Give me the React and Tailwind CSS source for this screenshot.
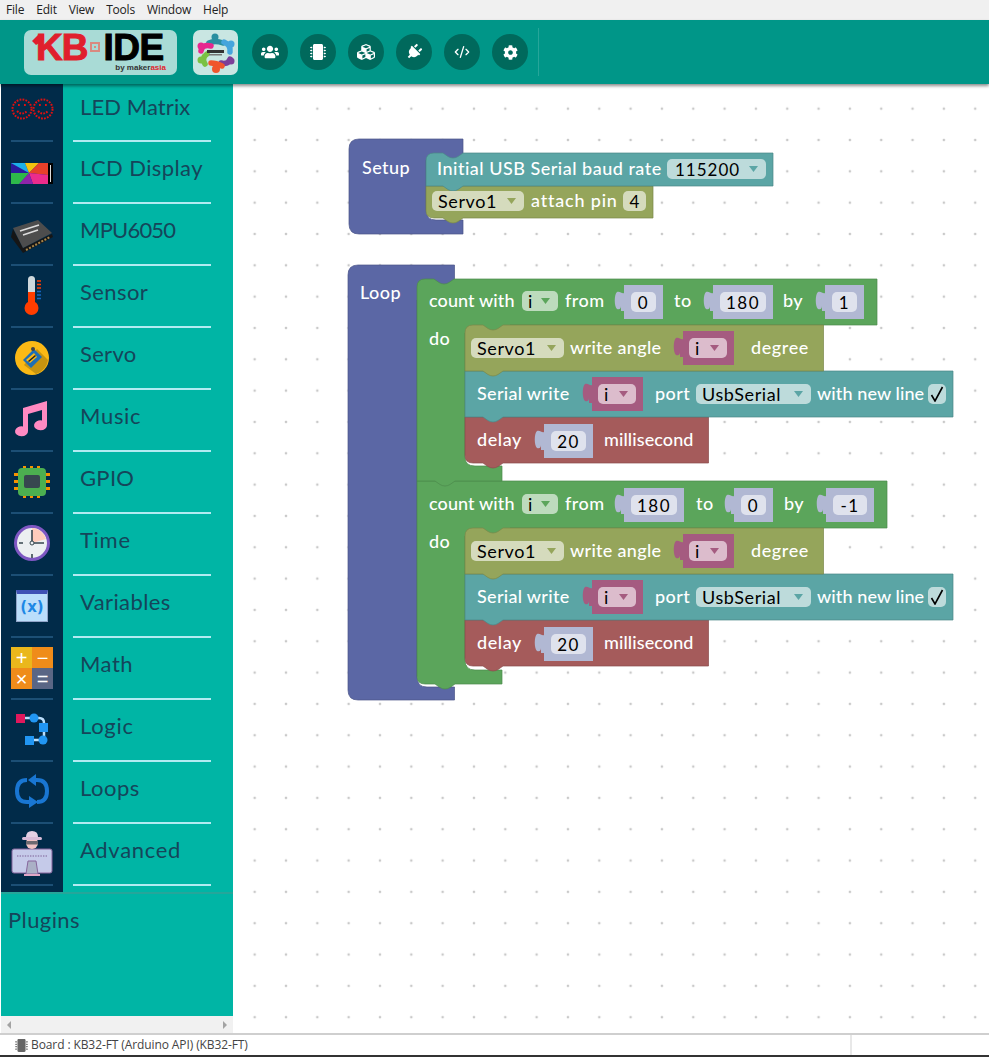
import React from 'react';
import { CodeXml } from 'lucide-react';
import { FaUsers, FaMicrochip, FaCubes, FaPlug, FaCog } from 'react-icons/fa';

// notch pieces for block outlines
const NOTCH = 'l5 3.5q2.5 1.5 5 1.5t5 -1.5l5 -3.5';
const TAB = 'l-5 3.5q-2.5 1.5 -5 1.5t-5 -1.5l-5 -3.5';

const PURPLE = ['#5b67a5', '#4a5488'];
const GREEN = ['#5ba55b', '#4c8a4c'];
const OLIVE = ['#95a55b', '#7a8849'];
const TEAL = ['#5ba5a5', '#4a8888'];
const RED = ['#a55b5b', '#8a4c4c'];

const Shape = ({ d, color }) => (
  <path d={d} fill={color[0]} stroke={color[1]} strokeWidth="0.7" />
);

const Label = ({ className = '', t = 'tracking-[0.45px]', children }) => (
  <span className={`mb-[3px] text-white text-[18px] font-medium leading-none whitespace-nowrap ${t} ${className}`}>{children}</span>
);

const Dropdown = ({ className, bg, arrow, children }) => (
  <div className={`h-5 rounded-[5px] flex items-center justify-between pl-[6px] pr-[8px] text-[18px] text-black tracking-[0.6px] leading-none ${bg} ${className}`}>
    <span>{children}</span>
    <svg width="9" height="6" viewBox="0 0 9 6"><polygon points="0,0 9,0 4.5,6" fill={arrow} /></svg>
  </div>
);

const PuzzleTab = ({ fill }) => (
  <svg className="absolute -left-[10px] top-0" width="10" height="34" viewBox="0 0 10 34">
    <path d="M10 8C8 9 6 6 3 7C0 9 0 22 3 24C6 25 7 23 7 21L7 26L10 26Z" fill={fill} />
  </svg>
);

const Value = ({ className, children }) => (
  <div className={`relative mt-[2px] h-[34px] bg-[#b1b8d3] p-[7px] flex ${className}`}>
    <PuzzleTab fill="#b1b8d3" />
    <div className="flex-1 rounded-[5px] bg-[#dfe2ed] flex items-center justify-center text-[17px] text-black tracking-[1.5px] leading-none">
      {children}
    </div>
  </div>
);

const VarBlock = ({ className }) => (
  <div className={`relative h-[34px] w-[51px] bg-[#a55b80] py-[7px] pl-[6px] pr-[7px] flex ${className}`}>
    <PuzzleTab fill="#a55b80" />
    <Dropdown className="flex-1" bg="bg-[#dcbccc]" arrow="#a55b80">i</Dropdown>
  </div>
);

const CheckBox = () => (
  <div className="ml-[7px] w-[18px] h-5 rounded-[5px] bg-[#bddbdb] flex items-center justify-center">
    <svg width="14" height="16" viewBox="0 0 14 16"><path d="M1.5 9L5 15L12.5 1" fill="none" stroke="#000" strokeWidth="1.6" /></svg>
  </div>
);

const Row = ({ className, children }) => (
  <div className={`absolute h-[34px] flex items-center ${className}`}>{children}</div>
);

const Blocks = () => (
  <>
    <svg className="absolute inset-0" width="756" height="949" viewBox="233 84 756 949">
      {/* setup */}
      <Shape color={PURPLE} d="M359 139H463V160H426V210Q426 220 436 220H463V234H359Q349 234 349 224V149Q349 139 359 139Z" />
      <Shape color={OLIVE} d={`M426 186H653V218H463${TAB}H434Q426 218 426 210Z`} />
      <Shape color={TEAL} d={`M434 153H443${NOTCH}H773V186H463${TAB}H426V161Q426 153 434 153Z`} />
      {/* loop */}
      <Shape color={PURPLE} d="M358 265H454.5V300H417V677Q417 687 427 687H454.5V700H358Q348 700 348 690V275Q348 265 358 265Z" />
      <Shape color={GREEN} d={`M417 481H887V528H510V536H465V660Q465 670 475 670H502V684H455${TAB}H425Q417 684 417 676Z`} />
      <Shape color={GREEN} d={`M425 279H434${NOTCH}H877V325H510V333H465V457Q465 466 475 466H502V481H455${TAB}H417V287Q417 279 425 279Z`} />
      <Shape color={RED} d={`M465 417H708.5V463H503${TAB}H473Q465 463 465 455Z`} />
      <Shape color={TEAL} d={`M465 371H953V417H503${TAB}H465Z`} />
      <Shape color={OLIVE} d={`M473 325H483${NOTCH}H823.5V371H503${TAB}H465V333Q465 325 473 325Z`} />
      <Shape color={RED} d={`M465 620H708.5V666H503${TAB}H473Q465 666 465 658Z`} />
      <Shape color={TEAL} d={`M465 574H953V620H503${TAB}H465Z`} />
      <Shape color={OLIVE} d={`M473 528H483${NOTCH}H823.5V574H503${TAB}H465V536Q465 528 473 528Z`} />
    </svg>

    <Row className="left-[129px] top-[67px]"><Label>Setup</Label></Row>
    <Row className="left-[204px] top-[68px]">
      <Label className="w-[230px]" t="tracking-[0.5px]">Initial USB Serial baud rate</Label>
      <Dropdown className="w-[99px]" bg="bg-[#bddbdb]" arrow="#5ba5a5"><span className="pl-[2px] text-[17px] tracking-[1px]">115200</span></Dropdown>
    </Row>
    <Row className="left-[199px] top-[100px]">
      <Dropdown className="w-[92px] mr-[7px]" bg="bg-[#d5dbbd]" arrow="#95a55b">Servo1</Dropdown>
      <Label className="w-[92px]" t="tracking-[0.8px]">attach pin</Label>
      <div className="w-[23px] h-5 rounded-[5px] bg-[#d5dbbd] flex items-center justify-center text-[17px] text-black leading-none">4</div>
    </Row>

    <Row className="left-[127px] top-[192px]"><Label>Loop</Label></Row>

    {/* first count */}
    <Row className="left-[196px] top-[200px]">
      <Label className="w-[93px]" t="tracking-[0.1px]">count with</Label>
      <Dropdown className="w-9 mr-[7px]" bg="bg-[#bddbbd]" arrow="#5ba55b">i</Dropdown>
      <Label className="w-[59px]">from</Label>
      <Value className="w-[39px] mr-[11px]">0</Value>
      <Label className="w-[39px]">to</Label>
      <Value className="w-[60px] mr-[10px]">180</Value>
      <Label className="w-[42px]">by</Label>
      <Value className="w-[39px]">1</Value>
    </Row>
    <Row className="left-[196px] top-[238px]"><Label>do</Label></Row>
    <Row className="left-[238px] top-[247px]">
      <Dropdown className="w-[93px] mr-[6px]" bg="bg-[#d5dbbd]" arrow="#95a55b">Servo1</Dropdown>
      <Label className="w-[113px]" t="tracking-[0.3px]">write angle</Label>
      <VarBlock className="mr-[17px]" />
      <Label t="tracking-[0.6px]">degree</Label>
    </Row>
    <Row className="left-[244px] top-[293px]">
      <Label className="w-[115px]" t="tracking-[0.3px]">Serial write</Label>
      <VarBlock className="mr-[12px]" />
      <Label className="w-[41px]">port</Label>
      <Dropdown className="w-[115px] mr-[6px]" bg="bg-[#bddbdb]" arrow="#5ba5a5">UsbSerial</Dropdown>
      <Label className="w-[104px]" t="tracking-[0.1px]">with new line</Label>
      <CheckBox />
    </Row>
    <Row className="left-[244px] top-[339px]">
      <Label className="w-[67px]" t="tracking-[0.6px]">delay</Label>
      <Value className="w-[49px] mr-[11px]">20</Value>
      <Label t="tracking-[0.1px]">millisecond</Label>
    </Row>

    {/* second count */}
    <Row className="left-[196px] top-[403px]">
      <Label className="w-[93px]" t="tracking-[0.1px]">count with</Label>
      <Dropdown className="w-9 mr-[7px]" bg="bg-[#bddbbd]" arrow="#5ba55b">i</Dropdown>
      <Label className="w-[59px]">from</Label>
      <Value className="w-[60px] mr-[12px]">180</Value>
      <Label className="w-[38px]">to</Label>
      <Value className="w-[39px] mr-[11px]">0</Value>
      <Label className="w-[42px]">by</Label>
      <Value className="w-[48px]">-1</Value>
    </Row>
    <Row className="left-[196px] top-[441px]"><Label>do</Label></Row>
    <Row className="left-[238px] top-[450px]">
      <Dropdown className="w-[93px] mr-[6px]" bg="bg-[#d5dbbd]" arrow="#95a55b">Servo1</Dropdown>
      <Label className="w-[113px]" t="tracking-[0.3px]">write angle</Label>
      <VarBlock className="mr-[17px]" />
      <Label t="tracking-[0.6px]">degree</Label>
    </Row>
    <Row className="left-[244px] top-[496px]">
      <Label className="w-[115px]" t="tracking-[0.3px]">Serial write</Label>
      <VarBlock className="mr-[12px]" />
      <Label className="w-[41px]">port</Label>
      <Dropdown className="w-[115px] mr-[6px]" bg="bg-[#bddbdb]" arrow="#5ba5a5">UsbSerial</Dropdown>
      <Label className="w-[104px]" t="tracking-[0.1px]">with new line</Label>
      <CheckBox />
    </Row>
    <Row className="left-[244px] top-[542px]">
      <Label className="w-[67px]" t="tracking-[0.6px]">delay</Label>
      <Value className="w-[49px] mr-[11px]">20</Value>
      <Label t="tracking-[0.1px]">millisecond</Label>
    </Row>
  </>
);

/* sidebar icons, 62x62 cells */
const Icon = ({ children }) => (
  <svg width="62" height="62" viewBox="0 0 62 62">{children}</svg>
);

const LedIcon = () => (
  <Icon>
    <g fill="none" stroke="#e01010" strokeWidth="2" strokeDasharray="1.8 1.2">
      <circle cx="21" cy="30" r="9.5" /><circle cx="42" cy="30" r="9.5" />
      <path d="M16 32q5 5 10 0M37 32q5 5 10 0" />
      <path d="M17 26h2M23 26h2M38 26h2M44 26h2" />
    </g>
  </Icon>
);

const LcdIcon = () => (
  <Icon>
    <g transform="translate(0 -6)">
      <rect x="10" y="30" width="42" height="21" fill="#000" />
      <rect x="10" y="30" width="37" height="21" fill="#2a1a9c" />
      <polygon points="10,30 24,30 28,40" fill="#1bb0e8" />
      <polygon points="24,30 38,30 28,40" fill="#f4c20d" />
      <polygon points="38,30 47,30 47,42 28,40" fill="#e8402a" />
      <polygon points="47,42 47,51 32,51 28,40" fill="#ec2c8c" />
      <polygon points="32,51 18,51 28,40" fill="#8e24aa" />
      <polygon points="18,51 10,51 10,40 28,40" fill="#2eb84a" />
      <rect x="49" y="32" width="1" height="17" fill="#ddd" />
    </g>
  </Icon>
);

const MpuIcon = () => (
  <Icon>
    <polygon points="12,28 10,36 22,52 52,36 51,33 22,47" fill="#161616" />
    <polygon points="37,19 12,27 22,47 51,32" fill="#4d4d4d" />
    <path d="M19 30l19-6M22 34l15-5" stroke="#ddd" strokeWidth="1.6" />
    <path d="M25 49l24-13" stroke="#a8864a" strokeWidth="2" strokeDasharray="2 1.5" />
  </Icon>
);

const ThermoIcon = () => (
  <Icon>
    <g transform="translate(0 3)">
      <rect x="27" y="10" width="7" height="28" rx="3.5" fill="#cfd8dc" />
      <rect x="27" y="26" width="7" height="16" fill="#ff3d00" />
      <circle cx="30.5" cy="42" r="7" fill="#ff3d00" />
      <path d="M36 15h4M36 18.5h4M36 22h4" stroke="#ff3d00" strokeWidth="1.5" />
      <path d="M36 25.5h4M36 29h4M36 32.5h4" stroke="#1565c0" strokeWidth="1.5" />
    </g>
  </Icon>
);

const ServoIcon = () => (
  <Icon>
    <g transform="translate(0 3)">
      <circle cx="31" cy="30" r="17" fill="#fbb915" />
      <path d="M23 37L36 21L47 32A17 17 0 0 1 35 46Z" fill="#c79410" />
      <polygon points="22,32 33,21 41,29 30,40" fill="#1f6fb5" />
      <polygon points="25,32 33,25 36,29 29,35" fill="#fbb915" />
      <polygon points="27,33 34,27 35,28 28,34" fill="#222" />
      <circle cx="32" cy="21" r="2" fill="#444" />
    </g>
  </Icon>
);

const MusicIcon = () => (
  <Icon>
    <path transform="translate(0 2)" d="M22 19L46 12V36A6.5 5 0 1 1 41 31.5V21L27 25V42A6.5 5 0 1 1 22 37.5Z" fill="#ff8ac2" />
  </Icon>
);

const GpioIcon = () => (
  <Icon>
    <g transform="translate(0 -3)">
      <g fill="#f59300">
        <rect x="22" y="20" width="3" height="3" /><rect x="29" y="20" width="3" height="3" /><rect x="36" y="20" width="3" height="3" />
        <rect x="22" y="49" width="3" height="3" /><rect x="29" y="49" width="3" height="3" /><rect x="36" y="49" width="3" height="3" />
        <rect x="13" y="27" width="4" height="3" /><rect x="13" y="34" width="4" height="3" /><rect x="13" y="41" width="4" height="3" />
        <rect x="45" y="27" width="4" height="3" /><rect x="45" y="34" width="4" height="3" /><rect x="45" y="41" width="4" height="3" />
      </g>
      <rect x="17" y="22" width="28" height="28" rx="4" fill="#4caf50" />
      <rect x="23" y="29" width="16" height="13" rx="2" fill="#37474f" />
    </g>
  </Icon>
);

const ClockIcon = () => (
  <Icon>
    <g transform="translate(0 1)">
      <circle cx="31" cy="31" r="16.5" fill="#eceff1" stroke="#7e57c2" strokeWidth="3" />
      <path d="M31 31V16A15 15 0 0 1 45 27Z" fill="#ffccbc" />
      <path d="M31 31V18M31 31H43" stroke="#37474f" strokeWidth="1.6" />
      <path d="M18 31h4M31 42v4" stroke="#37474f" strokeWidth="1.6" />
      <circle cx="31" cy="31" r="2" fill="#eceff1" stroke="#37474f" />
    </g>
  </Icon>
);

const VarIcon = () => (
  <div className="mt-1 w-8 h-8 bg-[#bbdefb] border-t-4 border-t-[#3f51b5] border-x border-b border-[#90a4c8] flex items-center justify-center text-[#1e88e5] text-[15px] font-bold font-['DejaVu_Sans',sans-serif] leading-none">
    (x)
  </div>
);

const MathIcon = () => (
  <div className="mt-1 grid grid-cols-2 w-[42px] h-[42px] text-white text-[20px] leading-none text-center font-['Liberation_Sans',sans-serif]">
    <div className="bg-[#eab71c] flex items-center justify-center">+</div>
    <div className="bg-[#ef8c1a] flex items-center justify-center">−</div>
    <div className="bg-[#ef8c1a] flex items-center justify-center">×</div>
    <div className="bg-[#5a6685] flex items-center justify-center">=</div>
  </div>
);

const LogicIcon = () => (
  <Icon>
    <g transform="translate(0 7)">
      <path d="M24 14H38Q43 14 43 19V36H30" fill="none" stroke="#bbdefb" strokeWidth="2.5" />
      <rect x="15" y="10" width="9" height="9" fill="#e0185c" />
      <circle cx="33" cy="14" r="4.5" fill="#2196f3" />
      <rect x="38" y="19" width="9" height="9" fill="#2196f3" />
      <rect x="24" y="32" width="9" height="9" fill="#2196f3" />
      <circle cx="42" cy="36" r="4.5" fill="#2196f3" />
    </g>
  </Icon>
);

const LoopIcon = () => (
  <Icon>
    <g fill="none" stroke="#1976d2" strokeWidth="4">
      <path d="M26 21Q16 21 16 32Q16 43 26 43H28" />
      <path d="M36 43Q46 43 46 32Q46 21 36 21H34" />
    </g>
    <polygon points="35,15 35,27 27,21" fill="#1976d2" />
    <polygon points="28,37 28,49 37,43" fill="#1976d2" />
  </Icon>
);

const AdvancedIcon = () => (
  <Icon>
    <g transform="translate(0 2)">
      <rect x="11" y="26" width="40" height="24" rx="2" fill="#c5cae9" stroke="#86659c" strokeWidth="1" />
      <path d="M16 33h30" stroke="#7d5f96" strokeWidth="1.2" strokeDasharray="1.4 1.2" />
      <polygon points="27,38 35,38 37,51 25,51" fill="#aab0c6" stroke="#86659c" />
      <path d="M23 52h16" stroke="#e0a6c6" strokeWidth="2" />
      <circle cx="31" cy="20" r="6" fill="#f0c4c4" />
      <rect x="21" y="14" width="20" height="3" rx="1.5" fill="#d9bcd8" />
      <path d="M25 14q0-6 6-6t6 6z" fill="#e4d0e4" />
      <rect x="25" y="18" width="12" height="3.5" fill="#6d6a70" />
    </g>
  </Icon>
);

const MENU = [
  { name: 'LED Matrix', icon: <LedIcon />, t: 'tracking-[0.1px] mb-[3px]' },
  { name: 'LCD Display', icon: <LcdIcon />, t: 'tracking-[0.4px]' },
  { name: 'MPU6050', icon: <MpuIcon />, t: 'tracking-[-0.8px]' },
  { name: 'Sensor', icon: <ThermoIcon />, t: 'tracking-[0.4px]' },
  { name: 'Servo', icon: <ServoIcon />, t: 'tracking-[0.3px]' },
  { name: 'Music', icon: <MusicIcon />, t: 'tracking-[0.7px]' },
  { name: 'GPIO', icon: <GpioIcon />, t: 'tracking-[0.3px]' },
  { name: 'Time', icon: <ClockIcon />, t: 'tracking-[0.7px]' },
  { name: 'Variables', icon: <VarIcon />, t: 'tracking-[0.4px]' },
  { name: 'Math', icon: <MathIcon />, t: 'tracking-[0.5px]' },
  { name: 'Logic', icon: <LogicIcon />, t: 'tracking-[0.7px]' },
  { name: 'Loops', icon: <LoopIcon />, t: 'tracking-[0.5px]' },
  { name: 'Advanced', icon: <AdvancedIcon />, t: 'tracking-[0.7px]' },
];

const Sidebar = () => (
  <aside className="w-[233px] pl-px flex flex-col bg-white">
    <div className="flex flex-col bg-[#00b5a5]">
      {MENU.map((item, i) => (
        <div key={item.name} className={`flex ${i === 0 ? 'h-[58px]' : 'h-[62px]'}`}>
          <div className="w-[62px] bg-[#012b49] relative flex items-center justify-center overflow-hidden">
            <div className="pb-[6px] flex items-center justify-center">{item.icon}</div>
            <div className="absolute bottom-0 left-[10px] w-[42px] h-[2px] bg-[#1c4f75]" />
          </div>
          <div className="flex-1 relative pl-[17px] pb-[11px] flex items-center text-[22px] text-[#15455a]">
            <span className={item.t}>{item.name}</span>
            <div className="absolute bottom-0 left-[10px] w-[138px] h-[2px] bg-[#b2ebf2]" />
          </div>
        </div>
      ))}
      <div className="flex h-[6px]">
        <div className="w-[62px] bg-[#012b49]" />
      </div>
    </div>
    <div className="flex-1 bg-[#00b5a5] border-t-2 border-[#26a69a] pl-[7px] pt-[9px] text-[22px] text-[#15455a] tracking-[0.4px]">
      Plugins
    </div>
    <div className="h-[17px] bg-[#f1f1f1] flex items-center justify-between px-[6px]">
      <div className="w-0 h-0 border-y-[4px] border-y-transparent border-r-[4px] border-r-[#a3a3a3]" />
      <div className="w-0 h-0 border-y-[4px] border-y-transparent border-l-[4px] border-l-[#a3a3a3]" />
    </div>
  </aside>
);

const CommunityLogo = () => (
  <svg width="45" height="45" viewBox="0 0 45 45">
    <g fill="none" strokeWidth="5.5" strokeLinecap="round">
      <path d="M16 13Q22 10 30 13" stroke="#2a8fa0" />
      <path d="M31 12Q38 15 37 22" stroke="#45a5dc" />
      <path d="M37 29Q35 35 28 33" stroke="#7b3f98" />
      <path d="M29 36Q23 33 18 33" stroke="#f0562c" />
      <path d="M12 34Q8 28 14 24" stroke="#7ac143" />
      <path d="M8 21Q9 14 18 16" stroke="#e6278f" />
    </g>
    <circle cx="22" cy="7" r="3.5" fill="#2a8fa0" />
    <circle cx="38" cy="14" r="3.5" fill="#45a5dc" />
    <circle cx="38" cy="31" r="3.5" fill="#7b3f98" />
    <circle cx="23" cy="39" r="4" fill="#f0562c" />
    <circle cx="8" cy="30" r="3.5" fill="#7ac143" />
    <circle cx="8" cy="16" r="3.5" fill="#e6278f" />
    <rect x="14" y="20" width="17" height="3" fill="#333" />
    <rect x="16" y="24" width="13" height="1.5" fill="#777" />
  </svg>
);

const KbLogo = () => (
  <div className="relative w-[153px] h-[45px] rounded-[7px] bg-[#a9dbd6] font-['Liberation_Sans',sans-serif] font-bold">
    {/* the 1-shaped flag on the K */}
    <svg className="absolute left-[8px] top-[3px]" width="12" height="12" viewBox="0 0 12 12">
      <polygon points="0,8 7,1 12,1 12,7 4,12" fill="#e01f2d" />
    </svg>
    <div className="absolute left-[7px] top-[2px] flex items-center">
      <span className="text-[37px] leading-[31px] text-[#e01f2d] tracking-[-1px] [-webkit-text-stroke:1px_#e01f2d] ml-[5px]">KB</span>
      <svg width="14" height="12" viewBox="0 0 14 12" className="mx-[1px]">
        <rect x="3" y="2" width="8" height="8" fill="none" stroke="#d98a80" strokeWidth="2" />
        <rect x="6" y="5" width="2" height="2" fill="#d98a80" />
      </svg>
      <span className="text-[37px] leading-[31px] text-black tracking-[-0.5px] [-webkit-text-stroke:1px_#000]">IDE</span>
    </div>
    <div className="absolute right-[11px] bottom-[3px] text-[8px] leading-none text-[#333]">
      by maker<span className="text-[#e01f2d]">asia</span>
    </div>
  </div>
);

const ToolButton = ({ children }) => (
  <div className="w-9 h-9 rounded-full bg-[#00695c] text-white flex items-center justify-center">{children}</div>
);

export default function App() {
  return (
    <div className="h-screen flex flex-col overflow-hidden bg-white font-['Lato',sans-serif]">
      {/* Menu bar */}
      <div className="h-5 bg-[#f0f0f0] flex items-center gap-3 px-[6px] text-[12px] tracking-[-0.2px] text-[#222] font-['Open_Sans',sans-serif] shrink-0">
        <span>File</span><span>Edit</span><span>View</span><span>Tools</span><span>Window</span><span>Help</span>
      </div>

      {/* Toolbar */}
      <div className="relative z-10 h-16 bg-[#009688] flex items-center pl-6 shadow-[0_2px_3px_rgba(0,0,0,0.45)] shrink-0">
        <KbLogo />
        <div className="ml-4 w-[45px] h-[45px] rounded-[7px] bg-[#c9e6e2] overflow-hidden"><CommunityLogo /></div>
        <div className="ml-[14px] flex gap-3">
          <ToolButton><FaUsers size={18} /></ToolButton>
          <ToolButton><FaMicrochip size={16} /></ToolButton>
          <ToolButton><FaCubes size={18} /></ToolButton>
          <ToolButton><FaPlug size={16} className="rotate-45" /></ToolButton>
          <ToolButton><CodeXml size={16} strokeWidth={2} /></ToolButton>
          <ToolButton><FaCog size={15} /></ToolButton>
        </div>
        <div className="ml-[10px] w-px h-12 bg-[#26a69a]" />
      </div>

      {/* Main */}
      <div className="flex-1 flex min-h-0">
        <Sidebar />
        <main className="relative flex-1 overflow-hidden bg-white bg-[radial-gradient(circle,#c9c9c9_1.3px,transparent_1.6px)] bg-[size:31.33px_31.33px] bg-[position:6px_9px]">
          <Blocks />
        </main>
      </div>

      {/* Status bar */}
      <div className="h-[24px] shrink-0 bg-white border-t-2 border-[#cfcfcf] border-b-2 border-b-[#333] flex items-center text-[12px] tracking-[-0.1px] text-[#444] font-['Open_Sans',sans-serif]">
        <div className="w-[852px] h-full border-r-2 border-[#e8e8e8] flex items-center pl-[15px] gap-[3px]">
          <FaMicrochip size={13} className="text-[#666]" />
          <span>Board : KB32-FT (Arduino API) (KB32-FT)</span>
        </div>
      </div>
    </div>
  );
}
